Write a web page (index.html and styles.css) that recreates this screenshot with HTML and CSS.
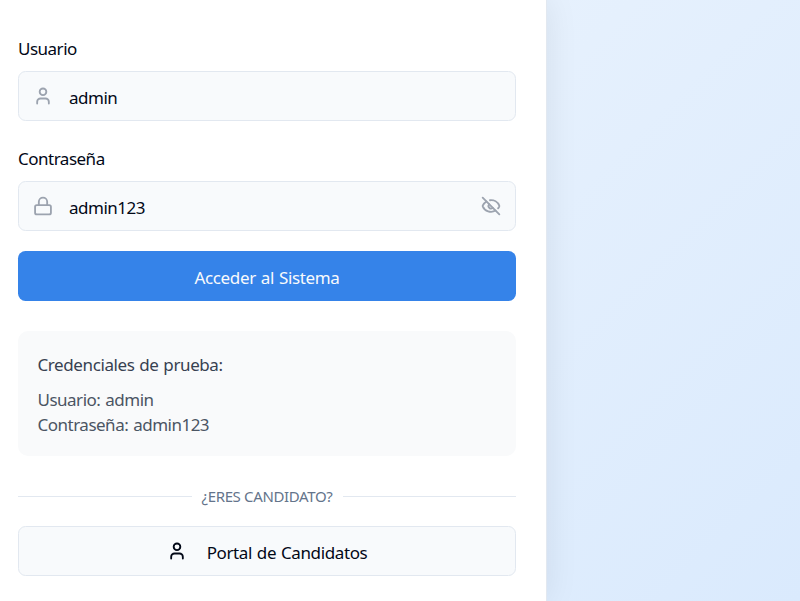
FILE: index.html
```html
<!DOCTYPE html>
<html lang="es">
<head>
<meta charset="utf-8">
<title>Acceso</title>
<link rel="stylesheet" href="styles.css">
</head>
<body>
<main class="card">
  <form class="form">
    <label class="label user-label" for="user">Usuario</label>
    <div class="field">
      <svg class="icon" viewBox="0 0 24 24"><circle cx="12" cy="7" r="4"/><path d="M19 21v-2a4 4 0 0 0-4-4H9a4 4 0 0 0-4 4v2"/></svg>
      <input class="input" id="user" type="text" value="admin">
    </div>
    <label class="label pass-label" for="pass">Contraseña</label>
    <div class="field">
      <svg class="icon" viewBox="0 0 24 24"><rect x="2.5" y="11" width="19" height="11" rx="2"/><path d="M7 11V7a5 5 0 0 1 10 0v4"/></svg>
      <input class="input" id="pass" type="text" value="admin123">
      <svg class="icon" viewBox="0 0 24 24"><path d="M10.73 5.08a10.74 10.74 0 0 1 11.21 6.57 1 1 0 0 1 0 .7 10.75 10.75 0 0 1-1.45 2.49"/><path d="M14.08 14.16a3 3 0 0 1-4.24-4.24"/><path d="M17.48 17.5A10.75 10.75 0 0 1 2.06 12.35a1 1 0 0 1 0-.7 10.75 10.75 0 0 1 4.45-5.14"/><path d="m2 2 20 20"/></svg>
    </div>
    <button class="submit" type="button"><span>Acceder al Sistema</span></button>
  </form>
  <section class="hint">
    <h2 class="hint-title">Credenciales de prueba:</h2>
    <p class="hint-line">Usuario: admin</p>
    <p class="hint-line">Contraseña: admin123</p>
  </section>
  <div class="divider"><span class="divider-text">¿ERES CANDIDATO?</span></div>
  <button class="portal" type="button">
    <svg class="icon" viewBox="0 0 24 24"><circle cx="12" cy="7" r="4"/><path d="M19 21v-2a4 4 0 0 0-4-4H9a4 4 0 0 0-4 4v2"/></svg>
    <span>Portal de Candidatos</span>
  </button>
</main>
</body>
</html>
```
FILE: styles.css
```css
* { box-sizing: border-box; }
body {
  margin: 0;
  height: 601px;
  overflow: hidden;
  background: linear-gradient(135deg, #eef5fd, #daeafd);
  font-family: "Noto Sans", "Open Sans", sans-serif;
  font-size: 17px;
  letter-spacing: -0.5px;
  color: #020817;
}
.card {
  width: 547px;
  height: 601px;
  padding: 36px 30px 0 18px;
  background: #fff;
  border-right: 1px solid #e2e8f0;
  box-shadow: 0 0 31px rgba(0, 0, 0, 0.08);
}
.form { display: flex; flex-direction: column; }
.label { height: 25px; line-height: 25px; margin-bottom: 10px; }
.pass-label { margin-top: 25px; }
.field {
  display: flex;
  align-items: center;
  height: 50px;
  padding: 0 14px;
  border: 1px solid #e2e8f0;
  border-radius: 7.5px;
  background: #f8fafc;
}
.icon {
  width: 20px;
  height: 20px;
  flex: none;
  fill: none;
  stroke: #9ca3af;
  stroke-width: 2.2;
  stroke-linecap: round;
  stroke-linejoin: round;
}
.input {
  flex: 1;
  min-width: 0;
  height: 48px;
  margin-left: 16px;
  padding: 2px 0 0;
  border: 0;
  outline: 0;
  background: none;
  font: inherit;
  letter-spacing: inherit;
  color: inherit;
}
.submit, .portal {
  display: flex;
  align-items: center;
  justify-content: center;
  height: 50px;
  padding: 2px 0 0;
  border: 0;
  border-radius: 7.5px;
  font: inherit;
  letter-spacing: -0.38px;
  word-spacing: 0.8px;
}
.submit { margin-top: 20px; background: #3583e9; color: #f8fafc; letter-spacing: -0.34px; }
.hint {
  height: 125px;
  margin-top: 30px;
  padding: 21px 20px 19px 19.5px;
  border-radius: 10px;
  background: #f9fafb;
  color: #4b5563;
}
.hint-title {
  margin: 0 0 10px;
  font-size: inherit;
  font-weight: 400;
  line-height: 25px;
  letter-spacing: -0.4px;
  word-spacing: 0.8px;
  color: #374151;
}
.hint-line { margin: 0; line-height: 25px; word-spacing: 1px; }
.divider {
  display: flex;
  align-items: center;
  gap: 10px;
  height: 20px;
  margin: 30px 0 20px;
  font-size: 15px;
  letter-spacing: -0.35px;
  color: #64748b;
}
.divider::before, .divider::after { content: ""; flex: 1; height: 1px; background: #e2e8f0; }
.portal {
  width: 100%;
  gap: 20px;
  border: 1px solid #e2e8f0;
  background: #f8fafc;
  color: #020817;
}
.portal .icon { stroke: #020817; margin-top: -2px; }
```
